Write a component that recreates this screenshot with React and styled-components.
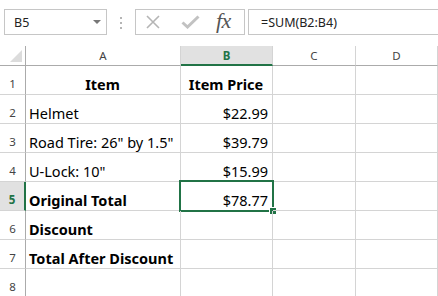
import React from 'react';
import styled, { createGlobalStyle, css } from 'styled-components';

const GREEN = '#217346';
const GRID = '#d4d4d4';

const GlobalStyle = createGlobalStyle`
  html, body {
    margin: 0;
    padding: 0;
    background: #fff;
    overflow: hidden;
  }
  body {
    font-family: "Noto Sans", "Open Sans", Arial, sans-serif;
    color: #000;
  }
`;

const COLUMNS = ['A', 'B', 'C', 'D'];
const SELECTED_COL = 'B';
const SELECTED_ROW = 5;

const ROWS = [
  { n: 1, a: 'Item', b: 'Item Price', header: true },
  { n: 2, a: 'Helmet', b: '$22.99' },
  { n: 3, a: 'Road Tire: 26" by 1.5"', b: '$39.79' },
  { n: 4, a: 'U-Lock: 10"', b: '$15.99' },
  { n: 5, a: 'Original Total', b: '$78.77', boldA: true },
  { n: 6, a: 'Discount', b: '', boldA: true },
  { n: 7, a: 'Total After Discount', b: '', boldA: true },
  { n: 8, a: '', b: '' },
];

const Page = styled.div`
  width: 438px;
  height: 296px;
  overflow: hidden;
`;

const Toolbar = styled.div`
  display: flex;
  align-items: flex-start;
  height: 46px;
  padding: 9px 0 0 4px;
  box-sizing: border-box;
`;

const NameBox = styled.div`
  display: flex;
  align-items: center;
  justify-content: space-between;
  width: 103px;
  height: 26px;
  box-sizing: border-box;
  border: 1px solid #c6c6c6;
  padding: 0 5px 0 9px;
  font-size: 12.5px;
  color: #222;
`;

const Caret = styled.span`
  width: 0;
  height: 0;
  border-left: 4px solid transparent;
  border-right: 4px solid transparent;
  border-top: 4px solid #777;
`;

const Grip = styled.div`
  display: flex;
  flex-direction: column;
  gap: 3px;
  margin: 8px 13px 0 13px;
  span {
    width: 2px;
    height: 2px;
    background: #b5b5b5;
  }
`;

const ActionBox = styled.div`
  display: flex;
  align-items: center;
  width: 110px;
  height: 26px;
  box-sizing: border-box;
  border: 1px solid #c6c6c6;
  padding-left: 9px;
`;

const IconSlot = styled.span`
  display: flex;
  align-items: center;
  width: ${p => p.$w}px;
`;

const Fx = styled.span`
  font-family: "Liberation Serif", "DejaVu Serif", serif;
  font-style: italic;
  font-size: 22px;
  color: #555;
  letter-spacing: -0.5px;
  line-height: 1;
  margin-top: -3px;
`;

const FormulaInput = styled.div`
  flex: 1;
  height: 26px;
  margin-left: 3px;
  box-sizing: border-box;
  border: 1px solid #c6c6c6;
  border-right: none;
  display: flex;
  align-items: center;
  padding-left: 12px;
  font-size: 12.5px;
  color: #222;
`;

const Sheet = styled.div`
  display: grid;
  grid-template-columns: 26px 155px 92px 83px 1fr;
  grid-template-rows: 20px;
  grid-auto-rows: 29px;
`;

const Corner = styled.div`
  position: relative;
  border-right: 1px solid #ababab;
  border-bottom: 1px solid #ababab;
  &::after {
    content: '';
    position: absolute;
    right: 3px;
    bottom: 3px;
    width: 0;
    height: 0;
    border-left: 12px solid transparent;
    border-bottom: 12px solid #dcdcdc;
  }
`;

const ColHeader = styled.div`
  display: flex;
  align-items: center;
  justify-content: center;
  font-size: 11.5px;
  color: #444;
  border-right: 1px solid ${GRID};
  border-bottom: 1px solid #ababab;
  ${p => p.$selected && css`
    background: #e1e1e1;
    color: ${GREEN};
    font-weight: 700;
    border-bottom: 2px solid ${GREEN};
  `}
`;

const RowHeader = styled.div`
  display: flex;
  align-items: flex-end;
  justify-content: center;
  padding-bottom: 3px;
  box-sizing: border-box;
  font-size: 11.5px;
  color: #444;
  border-right: 1px solid #ababab;
  border-bottom: 1px solid ${GRID};
  ${p => p.$selected && css`
    background: #e1e1e1;
    color: ${GREEN};
    font-weight: 700;
    border-right: 2px solid ${GREEN};
  `}
`;

const Cell = styled.div`
  position: relative;
  display: flex;
  align-items: flex-end;
  justify-content: ${p => (p.$align === 'right' ? 'flex-end' : p.$align === 'center' ? 'center' : 'flex-start')};
  padding: 0 4px 1px 3px;
  box-sizing: border-box;
  font-size: 14.5px;
  line-height: 18px;
  font-weight: ${p => (p.$bold ? 700 : 400)};
  white-space: nowrap;
  border-right: 1px solid ${GRID};
  border-bottom: 1px solid ${GRID};
  ${p => p.$active && css`
    &::before {
      content: '';
      position: absolute;
      top: -2px;
      left: -2px;
      right: -2px;
      bottom: -2px;
      border: 2px solid ${GREEN};
      pointer-events: none;
    }
    &::after {
      content: '';
      position: absolute;
      right: -5px;
      bottom: -5px;
      width: 6px;
      height: 6px;
      background: ${GREEN};
      border: 1px solid #fff;
    }
  `}
`;

const CloseIcon = () => (
  <svg width="16" height="16" viewBox="0 0 16 16">
    <path d="M2 2 L14 14 M14 2 L2 14" stroke="#b5b5b5" strokeWidth="1.6" fill="none" />
  </svg>
);

const CheckIcon = () => (
  <svg width="19" height="14" viewBox="0 0 19 14">
    <path d="M1.5 7.5 L6.5 12 L17.5 1.5" stroke="#c2c2c2" strokeWidth="3" fill="none" />
  </svg>
);

const FormulaBar = () => (
  <Toolbar>
    <NameBox>
      <span>B5</span>
      <Caret />
    </NameBox>
    <Grip>
      <span />
      <span />
      <span />
    </Grip>
    <ActionBox>
      <IconSlot $w={36}><CloseIcon /></IconSlot>
      <IconSlot $w={35}><CheckIcon /></IconSlot>
      <Fx>fx</Fx>
    </ActionBox>
    <FormulaInput>=SUM(B2:B4)</FormulaInput>
  </Toolbar>
);

const App = () => (
  <Page>
    <GlobalStyle />
    <FormulaBar />
    <Sheet>
      <Corner />
      {COLUMNS.map(c => (
        <ColHeader key={c} $selected={c === SELECTED_COL}>{c}</ColHeader>
      ))}
      {ROWS.map(row => (
        <React.Fragment key={row.n}>
          <RowHeader $selected={row.n === SELECTED_ROW}>{row.n}</RowHeader>
          <Cell $align={row.header ? 'center' : 'left'} $bold={row.header || row.boldA}>{row.a}</Cell>
          <Cell $align={row.header ? 'center' : 'right'} $bold={row.header} $active={row.n === SELECTED_ROW}>{row.b}</Cell>
          <Cell />
          <Cell />
        </React.Fragment>
      ))}
    </Sheet>
  </Page>
);

export default App;
